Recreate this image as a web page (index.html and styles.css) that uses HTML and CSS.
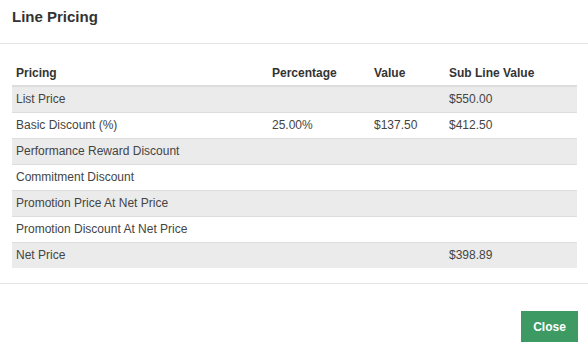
FILE: index.html
```html
<!DOCTYPE html>
<html>
<head>
<meta charset="utf-8">
<link rel="stylesheet" href="styles.css">
</head>
<body>
<div class="modal">
  <div class="modal-header">
    <h4 class="title">Line Pricing</h4>
  </div>
  <div class="modal-body">
    <table class="pricing">
      <thead>
        <tr><th class="c1">Pricing</th><th class="c2">Percentage</th><th class="c3">Value</th><th class="c4">Sub Line Value</th></tr>
      </thead>
      <tbody>
        <tr><td>List Price</td><td></td><td></td><td>$550.00</td></tr>
        <tr><td>Basic Discount (%)</td><td>25.00%</td><td>$137.50</td><td>$412.50</td></tr>
        <tr><td>Performance Reward Discount</td><td></td><td></td><td></td></tr>
        <tr><td>Commitment Discount</td><td></td><td></td><td></td></tr>
        <tr><td>Promotion Price At Net Price</td><td></td><td></td><td></td></tr>
        <tr><td>Promotion Discount At Net Price</td><td></td><td></td><td></td></tr>
        <tr><td>Net Price</td><td></td><td></td><td>$398.89</td></tr>
      </tbody>
    </table>
  </div>
  <div class="modal-footer">
    <button class="btn-close">Close</button>
  </div>
</div>
</body>
</html>
```
FILE: styles.css
```css
html, body {
  margin: 0;
  padding: 0;
  background: #fff;
}
body {
  font-family: "Liberation Sans", Arial, sans-serif;
  font-size: 12px;
  color: #444;
}
.modal {
  width: 588px;
}
.modal-header {
  height: 44px;
  box-sizing: border-box;
  border-bottom: 1px solid #e5e5e5;
  padding: 0 12px;
  display: flex;
  align-items: center;
}
.title {
  margin: 0;
  font-size: 15px;
  font-weight: bold;
  color: #333;
  position: relative;
  top: -5px;
}
.modal-body {
  padding: 16px 11px 15px 12px;
}
.pricing {
  width: 565px;
  border-collapse: collapse;
  table-layout: fixed;
}
.pricing th, .pricing td {
  text-align: left;
  padding: 0 4px;
  height: 25px;
  border-top: 1px solid #ddd;
  line-height: 14px;
  vertical-align: middle;
}
.pricing td {
  height: 24px;
  padding-bottom: 1px;
}
.pricing th {
  font-weight: bold;
  color: #333;
  border-top: none;
  border-bottom: 2px solid #ddd;
}
.pricing tbody tr:nth-child(odd) td {
  background: #ebebeb;
}
.pricing tbody tr:first-child td {
  border-top: none;
}
.c1 { width: 248px; }
.c2 { width: 94px; }
.c3 { width: 67px; }
.c4 { width: auto; }
.modal-footer {
  border-top: 1px solid #e5e5e5;
  padding: 27px 10px 12px 0;
  display: flex;
  justify-content: flex-end;
}
.btn-close {
  width: 57px;
  height: 31px;
  border: none;
  border-radius: 0;
  background: #3d9a63;
  color: #fff;
  font-family: "Liberation Sans", Arial, sans-serif;
  font-size: 12px;
  font-weight: bold;
  padding: 0;
}
```
